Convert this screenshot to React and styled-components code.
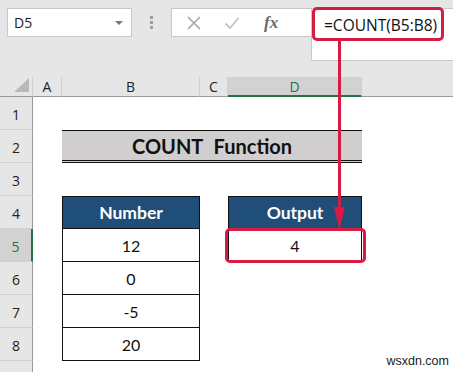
import styled, { createGlobalStyle } from "styled-components";

const GlobalStyle = createGlobalStyle`
  html, body {
    margin: 0;
    padding: 0;
    background: #ffffff;
    overflow: hidden;
  }
  * { box-sizing: border-box; }
`;

const RED = "#d81b42";
const GREEN = "#217346";

const Sheet = styled.div`
  position: relative;
  width: 453px;
  height: 372px;
  overflow: hidden;
  font-family: "Open Sans", "Liberation Sans", sans-serif;
  background: #ffffff;
`;

const FormulaArea = styled.div`
  display: flex;
  align-items: flex-start;
  height: 77px;
  padding-top: 8px;
  background: #e6e6e6;
`;

const NameBox = styled.div`
  display: flex;
  align-items: center;
  justify-content: space-between;
  width: 125px;
  height: 29px;
  margin-left: 7px;
  padding: 0 8px 0 6px;
  background: #ffffff;
  border: 1px solid #c8c8c8;
  font-size: 14px;
  color: #222;
`;

const Caret = styled.span`
  width: 0;
  height: 0;
  border-left: 4px solid transparent;
  border-right: 4px solid transparent;
  border-top: 4px solid #777;
`;

const Grip = styled.div`
  display: flex;
  flex-direction: column;
  align-items: center;
  gap: 2px;
  width: 39px;
  padding-top: 8px;
  span {
    width: 3px;
    height: 3px;
    background: #9e9e9e;
  }
`;

const ButtonBox = styled.div`
  display: flex;
  align-items: center;
  width: 140px;
  height: 29px;
  padding-left: 14px;
  gap: 22px;
  background: #ffffff;
  border: 1px solid #c8c8c8;
  border-right: none;
`;

const FxLabel = styled.span`
  font-family: "Liberation Serif", serif;
  font-style: italic;
  font-weight: 700;
  font-size: 17px;
  color: #6a6a6a;
  margin-left: 2px;
`;

const FormulaInput = styled.div`
  flex: 1;
  height: 53px;
  background: #ffffff;
  border: 1px solid #c8c8c8;
  border-right: none;
`;

const FormulaText = styled.span`
  display: inline-block;
  margin: -2px 0 0 0;
  padding: 2px 0 2px 9px;
  width: 132px;
  height: 34px;
  border: 3px solid ${RED};
  border-radius: 5px;
  font-size: 15.5px;
  line-height: 26px;
  color: #111;
`;

const Grid = styled.div`
  display: grid;
  grid-template-columns: 33px 29px 138px 28px 134px 1fr;
  grid-template-rows: 20px repeat(9, 33px);
`;

const Corner = styled.div`
  grid-column: 1;
  grid-row: 1;
  position: relative;
  background: #e6e6e6;
  border-right: 1px solid #d0d0d0;
  border-bottom: 1px solid #9a9a9a;
  &::after {
    content: "";
    position: absolute;
    right: 3px;
    bottom: 4px;
    width: 0;
    height: 0;
    border-left: 15px solid transparent;
    border-bottom: 14px solid #b9b9b9;
  }
`;

const ColHead = styled.div`
  grid-row: 1;
  grid-column: ${(p) => p.$col};
  display: flex;
  align-items: center;
  justify-content: center;
  font-size: 14px;
  color: ${(p) => (p.$active ? GREEN : "#222")};
  background: ${(p) => (p.$active ? "#d2d2d2" : "#e6e6e6")};
  border-right: ${(p) => (p.$last ? "none" : "1px solid #d0d0d0")};
  border-bottom: ${(p) => (p.$active ? `2px solid ${GREEN}` : "1px solid #9a9a9a")};
`;

const RowHead = styled.div`
  grid-column: 1;
  grid-row: ${(p) => p.$row};
  display: flex;
  align-items: center;
  justify-content: center;
  font-size: 14px;
  padding-top: 2px;
  color: ${(p) => (p.$active ? GREEN : "#222")};
  background: ${(p) => (p.$active ? "#d2d2d2" : "#e6e6e6")};
  border-bottom: 1px solid #d0d0d0;
  border-right: ${(p) => (p.$active ? `2px solid ${GREEN}` : "1px solid #9a9a9a")};
`;

const Title = styled.div`
  grid-column: 3 / 6;
  grid-row: 3;
  display: flex;
  align-items: center;
  justify-content: center;
  background: #d0cece;
  border-top: 1px solid #111;
  border-bottom: 3px double #111;
  font-family: Lato, "Liberation Sans", sans-serif;
  font-weight: 700;
  font-size: 20px;
  color: #111;
  word-spacing: 6px;
`;

const HeadCell = styled.div`
  grid-column: ${(p) => p.$col};
  grid-row: 5;
  display: flex;
  align-items: center;
  justify-content: center;
  background: #1f4e79;
  border: 1px solid #111;
  font-family: Lato, "Liberation Sans", sans-serif;
  font-weight: 700;
  font-size: 17.5px;
  color: #ffffff;
`;

const Cell = styled.div`
  grid-column: ${(p) => p.$col};
  grid-row: ${(p) => p.$row};
  position: relative;
  display: flex;
  align-items: center;
  justify-content: center;
  border: 1px solid #111;
  border-top: none;
  font-family: Lato, "Liberation Sans", sans-serif;
  font-size: 16px;
  color: #111;
  ${(p) =>
    p.$marked &&
    `
    &::after {
      content: "";
      position: absolute;
      top: -1px;
      left: -4px;
      right: -5px;
      bottom: -2px;
      border: 3px solid ${RED};
      border-radius: 5px;
    }
  `}
`;

const Arrow = styled.svg`
  position: absolute;
  left: 330px;
  top: 41px;
`;

const Watermark = styled.div`
  position: absolute;
  right: 4px;
  bottom: 4px;
  font-family: "Liberation Sans", Arial, sans-serif;
  font-size: 12.5px;
  color: #222;
`;

const cols = ["A", "B", "C", "D", ""];
const numbers = ["12", "0", "-5", "20"];
const rows = [1, 2, 3, 4, 5, 6, 7, 8, 9];

export default function App() {
  return (
    <Sheet>
      <GlobalStyle />
      <FormulaArea>
        <NameBox>
          D5
          <Caret />
        </NameBox>
        <Grip>
          <span />
          <span />
          <span />
        </Grip>
        <ButtonBox>
          <svg width="16" height="16" viewBox="0 0 16 16">
            <path d="M2 2 L14 14 M14 2 L2 14" stroke="#a8a8a8" strokeWidth="1.6" fill="none" />
          </svg>
          <svg width="16" height="16" viewBox="0 0 16 16">
            <path d="M1.5 8.5 L6 13 L14.5 3" stroke="#c4c4c4" strokeWidth="1.8" fill="none" />
          </svg>
          <FxLabel>fx</FxLabel>
        </ButtonBox>
        <FormulaInput>
          <FormulaText>=COUNT(B5:B8)</FormulaText>
        </FormulaInput>
      </FormulaArea>
      <Grid>
        <Corner />
        {cols.map((c, i) => (
          <ColHead key={i} $col={i + 2} $active={c === "D"} $last={i === cols.length - 1}>
            {c}
          </ColHead>
        ))}
        {rows.map((r) => (
          <RowHead key={r} $row={r + 1} $active={r === 5}>
            {r < 9 ? r : ""}
          </RowHead>
        ))}
        <Title>COUNT Function</Title>
        <HeadCell $col={3}>Number</HeadCell>
        <HeadCell $col={5}>Output</HeadCell>
        {numbers.map((n, i) => (
          <Cell key={n} $col={3} $row={i + 6}>
            {n}
          </Cell>
        ))}
        <Cell $col={5} $row={6} $marked>
          4
        </Cell>
      </Grid>
      <Arrow width="20" height="190" viewBox="0 0 20 190">
        <line x1="9.5" y1="0" x2="9.5" y2="170" stroke={RED} strokeWidth="3" />
        <polygon points="4,166 15,166 9.5,189" fill={RED} />
      </Arrow>
      <Watermark>wsxdn.com</Watermark>
    </Sheet>
  );
}
